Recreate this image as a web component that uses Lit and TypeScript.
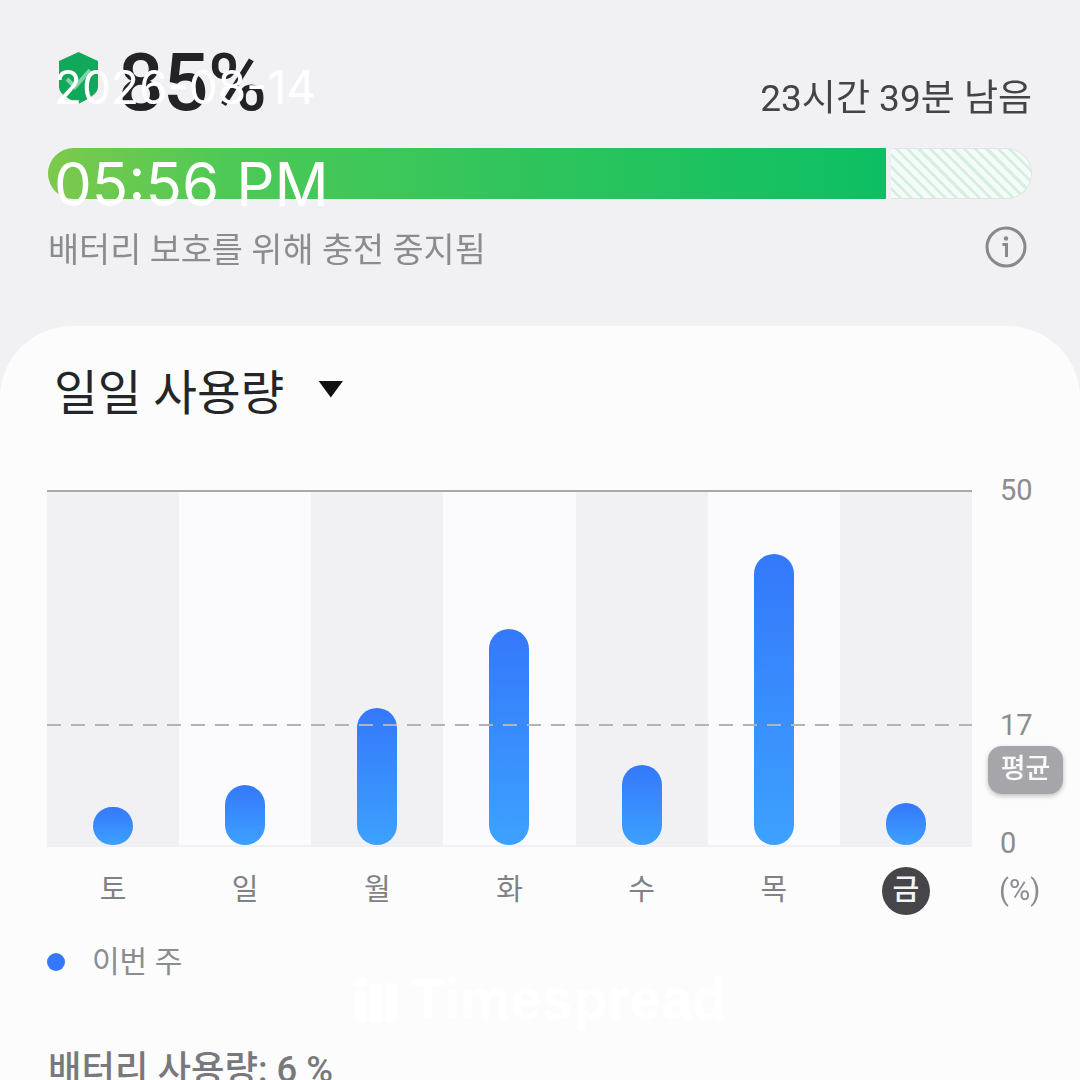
import { LitElement, html, css, svg } from "lit";
import { customElement } from "lit/decorators.js";

const DAYS = [
  { d: "토", v: 38 },
  { d: "일", v: 60 },
  { d: "월", v: 137 },
  { d: "화", v: 216 },
  { d: "수", v: 80 },
  { d: "목", v: 291 },
  { d: "금", v: 42, today: true },
];

const TICKS = [
  { label: "50", y: -2 },
  { label: "17", y: 233 },
  { label: "0", y: 351 },
];

@customElement("app-root")
export class AppRoot extends LitElement {
  static styles = css`
    :host {
      display: block;
      width: 1080px;
      height: 1080px;
      overflow: hidden;
      position: relative;
      background: #f1f1f4;
      font-family: "Roboto", "Noto Sans CJK KR", sans-serif;
    }
    .base {
      height: 1080px;
      display: flex;
      flex-direction: column;
      filter: blur(0.6px);
    }
    .head {
      height: 326px;
      flex: none;
      padding: 44px 48px 0 48px;
      box-sizing: border-box;
    }
    .top {
      display: flex;
      align-items: flex-end;
      justify-content: space-between;
      height: 78px;
    }
    .pct {
      display: flex;
      align-items: flex-start;
      gap: 19px;
      padding-left: 10px;
    }
    .shield {
      width: 41px;
      height: 52px;
      margin-top: 8px;
      flex: none;
    }
    .pct b {
      font-size: 80px;
      line-height: 78px;
      font-weight: 500;
      color: #222326;
      letter-spacing: -0.5px;
    }
    .remain {
      font-size: 37px;
      line-height: 44px;
      color: #434447;
      margin-bottom: 1px;
    }
    .track {
      display: flex;
      gap: 5px;
      height: 51px;
      margin-top: 26px;
    }
    .fill {
      width: 838px;
      background: linear-gradient(90deg, #7dc94c 0%, #4cc956 22%, #0cbf63 100%);
      border-radius: 26px 0 0 26px;
    }
    .rest {
      flex: 1;
      border: 1px solid #e0e4e3;
      border-left: none;
      border-radius: 0 26px 26px 0;
      background: repeating-linear-gradient(
        45deg,
        #f4fbf8 0 5px,
        #d5efe3 5px 8px
      );
    }
    .note {
      display: flex;
      justify-content: space-between;
      align-items: center;
      margin-top: 29px;
      padding-right: 5px;
      font-size: 33.8px;
      line-height: 46px;
      color: #8b8c8f;
    }
    .info {
      width: 42px;
      height: 42px;
      flex: none;
      margin-top: -9px;
    }
    .card {
      flex: 1;
      background: #fcfcfd;
      border-radius: 72px 72px 0 0;
      padding: 36px 48px 0 47px;
    }
    .title {
      display: flex;
      align-items: center;
      gap: 34px;
      padding-left: 7px;
      font-size: 47.5px;
      line-height: 64px;
      color: #242528;
    }
    .tri {
      width: 25px;
      height: 17px;
      flex: none;
      margin-top: -10px;
      background: #111;
      clip-path: polygon(0 0, 100% 0, 50% 100%);
    }
    .chart {
      position: relative;
      width: 925px;
      height: 357px;
      margin-top: 64px;
      display: grid;
      grid-template-columns: repeat(7, 1fr);
      border-top: 2px solid #a9a9ab;
      border-bottom: 2px solid #f0f0f2;
      box-sizing: border-box;
    }
    .col {
      display: flex;
      align-items: flex-end;
      justify-content: center;
    }
    .col:nth-child(odd) {
      background: #f1f1f3;
    }
    .col:nth-child(even) {
      background: #fbfbfe;
    }
    .bar {
      width: 40px;
      border-radius: 20px;
      background: linear-gradient(180deg, #3478fb, #3da1fe);
    }
    .avg {
      position: absolute;
      left: 0;
      right: 0;
      top: 232px;
      height: 2px;
      background: repeating-linear-gradient(
        90deg,
        #b4b4b6 0 14px,
        transparent 14px 24px
      );
    }
    .tick {
      position: absolute;
      left: 953px;
      font-size: 29px;
      line-height: 34px;
      color: #8b8c8f;
      transform: translateY(-17px);
    }
    .badge {
      position: absolute;
      left: 941px;
      top: 254px;
      width: 75px;
      height: 48px;
      border-radius: 14px;
      background: #a6a6aa;
      color: #fafafa;
      font-size: 27px;
      font-weight: 500;
      line-height: 46px;
      text-align: center;
      box-shadow: 0 2px 5px rgba(0, 0, 0, 0.25);
    }
    .labels {
      width: 925px;
      display: grid;
      grid-template-columns: repeat(7, 1fr);
      margin-top: 20px;
      position: relative;
    }
    .labels span {
      justify-self: center;
      width: 48px;
      height: 48px;
      border-radius: 50%;
      text-align: center;
      font-size: 29px;
      line-height: 46px;
      color: #808184;
    }
    .labels span.today {
      background: #46464a;
      color: #f4f4f4;
      font-weight: 500;
    }
    .unit {
      position: absolute;
      left: 952px;
      top: 3px;
      font-size: 29px;
      line-height: 40px;
      color: #8b8c8f;
    }
    .legend {
      display: flex;
      align-items: center;
      gap: 27px;
      margin-top: 25px;
      font-size: 30px;
      line-height: 44px;
      color: #8b8c8f;
    }
    .dot {
      width: 18px;
      height: 18px;
      border-radius: 50%;
      background: #3478fb;
    }
    .usage {
      margin-top: 63px;
      padding-left: 1px;
      font-size: 36.4px;
      line-height: 46px;
      font-weight: 500;
      color: #78797c;
      white-space: nowrap;
    }
    .stamp {
      position: absolute;
      left: 54px;
      color: #fff;
      white-space: nowrap;
      font-family: "Inter", sans-serif;
      font-weight: 400;
    }
    .date {
      top: 60px;
      font-size: 46px;
      line-height: 54px;
    }
    .time {
      top: 148px;
      font-size: 60px;
      line-height: 72px;
    }
    .mark {
      position: absolute;
      left: 355px;
      top: 975px;
      display: flex;
      align-items: center;
      gap: 14px;
      color: #fff;
      font-family: "Liberation Sans", sans-serif;
      font-size: 56.5px;
      line-height: 50px;
      font-weight: 700;
      filter: blur(0.8px);
    }
    .mark svg {
      width: 42px;
      height: 44px;
      fill: #fff;
    }
  `;

  render() {
    return html`
      <div class="base">
        <div class="head">
          <div class="top">
            <div class="pct">
              <svg class="shield" viewBox="0 0 41 52">
                <path
                  d="M20.500 0 40 9v26c0 7-10 12-19.500 17C11 47 1 42 1 35V9Z"
                  fill="#12a85c"
                />
                <path
                  d="m9 27 8 8 15-17"
                  fill="none"
                  stroke="#7fd3a6"
                  stroke-width="4"
                />
              </svg>
              <b>85%</b>
            </div>
            <div class="remain">23시간 39분 남음</div>
          </div>
          <div class="track">
            <div class="fill"></div>
            <div class="rest"></div>
          </div>
          <div class="note">
            <span>배터리 보호를 위해 충전 중지됨</span>
            <svg class="info" viewBox="0 0 42 42">
              <circle cx="21" cy="21" r="19" fill="none" stroke="#88898c" stroke-width="3" />
              <circle cx="21" cy="12.500" r="2.200" fill="#88898c" />
              <path d="M17.500 18.500H21.500V31" fill="none" stroke="#88898c" stroke-width="3" />
            </svg>
          </div>
        </div>
        <div class="card">
          <div class="title"><span>일일 사용량</span><i class="tri"></i></div>
          <div class="chart">
            ${DAYS.map(
              (x) => html`<div class="col">
                <div class="bar" style="height:${x.v}px"></div>
              </div>`
            )}
            <div class="avg"></div>
            ${TICKS.map(
              (t) => html`<span class="tick" style="top:${t.y}px">${t.label}</span>`
            )}
            <div class="badge">평균</div>
          </div>
          <div class="labels">
            ${DAYS.map(
              (x) => html`<span class=${x.today ? "today" : ""}>${x.d}</span>`
            )}
            <div class="unit">(%)</div>
          </div>
          <div class="legend"><i class="dot"></i><span>이번 주</span></div>
          <div class="usage">배터리 사용량: 6 %</div>
        </div>
      </div>
      <div class="stamp date">2026-08-14</div>
      <div class="stamp time">05:56 PM</div>
      <div class="mark">
        <svg viewBox="0 0 42 44">
          ${svg`<rect x="0" y="0" width="11" height="9"/><rect x="0" y="13" width="11" height="31"/><rect x="15" y="5" width="12" height="39"/><rect x="30" y="5" width="12" height="39"/>`}
        </svg>
        <span>Timespread</span>
      </div>
    `;
  }
}
